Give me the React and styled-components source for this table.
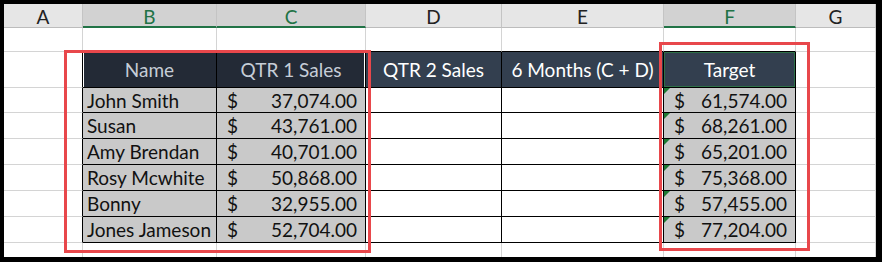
import React from "react";
import styled, { createGlobalStyle } from "styled-components";

const GlobalStyle = createGlobalStyle`
  html, body {
    margin: 0;
    padding: 0;
    background: #000;
  }
  body {
    font-family: Lato, "Liberation Sans", sans-serif;
  }
`;

const GRID = "#d4d4d4";
const INK = "#000";
const COLS = ["A", "B", "C", "D", "E", "F", "G"];
const SELECTED = ["B", "C", "F"];

const Frame = styled.div`
  position: relative;
  margin: 4px 0 0 4px;
  width: 872px;
  height: 253px;
  overflow: hidden;
  background: #fff;
`;

const Sheet = styled.div`
  display: grid;
  grid-template-columns: 79px 134px 149px 136px 162px 132px 80px;
  grid-template-rows: 24px 24px 36px 25px repeat(5, 26px) 26px;
`;

const ColHead = styled.div`
  box-sizing: border-box;
  display: flex;
  align-items: center;
  justify-content: center;
  padding-top: 2px;
  font-size: 19px;
  background: ${(p) => (p.$selected ? "#d2d2d2" : "#e6e6e6")};
  color: ${(p) => (p.$selected ? "#217346" : "#222")};
  border-right: 1px solid #c4c4c4;
  border-bottom: ${(p) => (p.$selected ? "2px solid #217346" : "1px solid #bcbcbc")};
`;

const Cell = styled.div`
  box-sizing: border-box;
  position: relative;
  display: flex;
  align-items: center;
  justify-content: ${(p) => p.$justify || "flex-start"};
  padding: ${(p) => p.$pad || "0 4px"};
  font-size: 19px;
  white-space: nowrap;
  background: ${(p) => p.$bg || "#fff"};
  color: ${(p) => p.$color || "#111"};
  border-right: 1px solid ${(p) => p.$right};
  border-bottom: 1px solid ${(p) => p.$bottom};
  box-shadow: ${(p) => p.$shadow || "none"};
`;

const Flag = styled.span`
  position: absolute;
  top: 0;
  left: 0;
  width: 0;
  height: 0;
  border-top: 6px solid #1f7a34;
  border-right: 6px solid transparent;
`;

const Highlight = styled.div`
  position: absolute;
  box-sizing: border-box;
  border: 3px solid #e8474b;
  pointer-events: none;
`;

const rows = [
  ["John Smith", "37,074.00", "61,574.00"],
  ["Susan", "43,761.00", "68,261.00"],
  ["Amy Brendan", "40,701.00", "65,201.00"],
  ["Rosy Mcwhite", "50,868.00", "75,368.00"],
  ["Bonny", "32,955.00", "57,455.00"],
  ["Jones Jameson", "52,704.00", "77,204.00"],
];

const headings = {
  1: { text: "Name", bg: "#232a36", color: "#c6cdd7", shadow: "inset 1px 1px 0 #fff" },
  2: { text: "QTR 1 Sales", bg: "#232a36", color: "#c6cdd7", shadow: "inset -1px 1px 0 #fff" },
  3: { text: "QTR 2 Sales", bg: "#333f4f", color: "#fff" },
  4: { text: "6 Months (C + D)", bg: "#333f4f", color: "#fff" },
  5: { text: "Target", bg: "#333f4f", color: "#fff", shadow: "inset 0 0 0 1px #2e7048" },
};

// sheet rows 1..9 (index 0..8), table covers rows 2-8 and columns B-F
const inTable = (r, c) => r >= 1 && r <= 7 && c >= 1 && c <= 5;

const edges = (r, c) => ({
  $right: inTable(r, c) || inTable(r, c + 1) ? INK : GRID,
  $bottom: inTable(r, c) || inTable(r + 1, c) ? INK : GRID,
});

const Money = ({ value }) => (
  <>
    <span>$</span>
    <span>{value}</span>
  </>
);

const renderCell = (r, c) => {
  const key = `${r}-${c}`;
  const border = edges(r, c);

  if (r === 1 && headings[c]) {
    const h = headings[c];
    return (
      <Cell key={key} {...border} $justify="center" $bg={h.bg} $color={h.color} $shadow={h.shadow}>
        {h.text}
      </Cell>
    );
  }

  const row = rows[r - 2];
  if (row) {
    if (c === 1) {
      return (
        <Cell key={key} {...border} $bg="#c9c9c9">
          {row[0]}
        </Cell>
      );
    }
    if (c === 2) {
      return (
        <Cell key={key} {...border} $bg="#c9c9c9" $justify="space-between" $pad="0 8px 0 10px">
          <Money value={row[1]} />
        </Cell>
      );
    }
    if (c === 5) {
      return (
        <Cell key={key} {...border} $bg="#c9c9c9" $justify="space-between" $pad="0 8px 0 10px">
          <Flag />
          <Money value={row[2]} />
        </Cell>
      );
    }
  }

  return <Cell key={key} {...border} />;
};

export default function App() {
  return (
    <>
      <GlobalStyle />
      <Frame>
        <Sheet>
          {COLS.map((col) => (
            <ColHead key={col} $selected={SELECTED.includes(col)}>
              {col}
            </ColHead>
          ))}
          {Array.from({ length: 9 }, (_, r) => COLS.map((_, c) => renderCell(r, c)))}
        </Sheet>
        <Highlight style={{ left: 60, top: 46, width: 307, height: 203 }} />
        <Highlight style={{ left: 655, top: 38, width: 151, height: 209 }} />
      </Frame>
    </>
  );
}
